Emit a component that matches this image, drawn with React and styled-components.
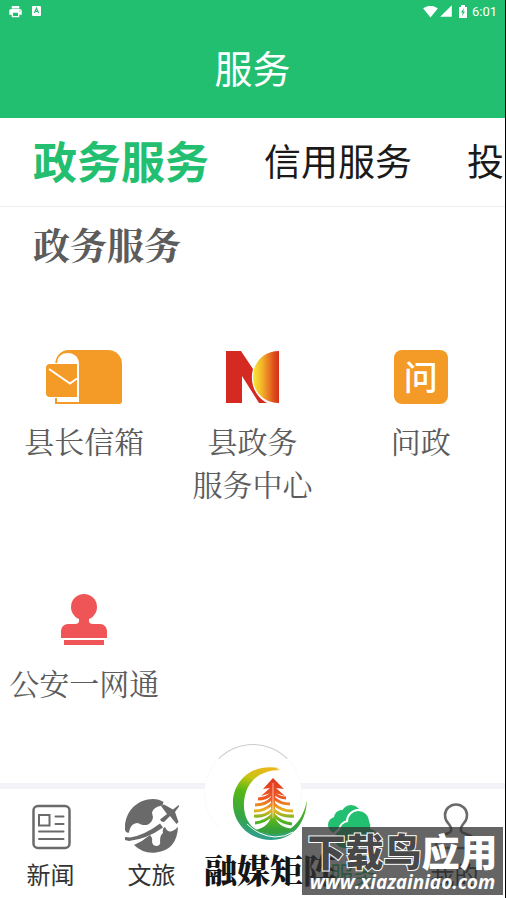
import { useState } from "react"
import styled, { createGlobalStyle } from "styled-components"
import { MdPrint, MdSignalWifi4Bar, MdSignalCellular4Bar } from "react-icons/md"

const tabs = ["政务服务", "信用服务", "投诉建议"]

const App = () => {
    const [tab, setTab] = useState(tabs[0])

    return (
        <>
            <GlobalStyle />
            <Page>
                <Header>
                    <StatusBar>
                        <StatusGroup $gap={9}>
                            <MdPrint size={15} />
                            <KeyboardIcon />
                        </StatusGroup>
                        <StatusGroup $gap={1}>
                            <MdSignalWifi4Bar size={15} />
                            <MdSignalCellular4Bar size={14} />
                            <BatteryIcon />
                            <Clock>6:01</Clock>
                        </StatusGroup>
                    </StatusBar>
                    <Title>服务</Title>
                </Header>

                <Tabs>
                    {tabs.map((name) => (
                        <Tab key={name} $active={name === tab} onClick={() => setTab(name)}>
                            {name}
                        </Tab>
                    ))}
                </Tabs>

                <Main>
                    <SectionHeader>政务服务</SectionHeader>
                    <ServiceGrid>
                        <Service href="#">
                            <MailboxIcon />
                            <span>县长信箱</span>
                        </Service>
                        <Service href="#">
                            <CenterIcon />
                            <span>县政务<br />服务中心</span>
                        </Service>
                        <Service href="#">
                            <AskIcon>问</AskIcon>
                            <span>问政</span>
                        </Service>
                        <Service href="#">
                            <StampIcon />
                            <span>公安一网通</span>
                        </Service>
                    </ServiceGrid>
                </Main>

                <BottomNav>
                    <NavItem href="#">
                        <NewsIcon />
                        新闻
                    </NavItem>
                    <NavItem href="#">
                        <TravelIcon />
                        文旅
                    </NavItem>
                    <NavLogo href="#">
                        <Bubble />
                        <LogoBox>
                            <TreeLogo />
                            <LogoText>融媒矩阵</LogoText>
                        </LogoBox>
                    </NavLogo>
                    <NavItem href="#" $active>
                        <CloudIcon />
                        服务
                    </NavItem>
                    <NavItem href="#">
                        <UserIcon />
                        我的
                    </NavItem>
                </BottomNav>

                <Watermark>
                    <WatermarkName><Outlined>下载鸟</Outlined>应用</WatermarkName>
                    <WatermarkUrl>www.xiazainiao.com</WatermarkUrl>
                </Watermark>
            </Page>
        </>
    )
}

export default App

const KeyboardIcon = () => (
    <svg width="9" height="10" viewBox="0 0 9 10">
        <rect width="9" height="10" rx="1" fill="#fff" />
        <path d="M2.4 7 4.5 2.2 6.6 7M3.2 5.4h2.6" fill="none" stroke="#23bf70" strokeWidth="1.1" />
    </svg>
)

const BatteryIcon = () => (
    <svg width="17" height="13" viewBox="0 0 17 13">
        <path d="M5 2h2V0h4v2h2v11H5z" fill="#fff" />
        <path d="M10 3 7 7.5h1.7L8 11l3-4.5H9.3z" fill="#23bf70" />
    </svg>
)

const MailboxIcon = () => (
    <svg width="76" height="54" viewBox="0 0 76 54">
        <path d="M9 16C9 6 15 0 23 0h39a14 14 0 0 1 14 14v37a3 3 0 0 1-3 3H9z" fill="#f39a27" />
        <path d="M11 52V14C11 7 15 3 22 3s11 5 11 11v38z" fill="#fff" />
        <path d="M4 13h28v35H4a5 5 0 0 1-5-5V18a5 5 0 0 1 5-5z" fill="#fff" />
        <path d="M4 14h27v33H4a4 4 0 0 1-4-4V18a4 4 0 0 1 4-4z" fill="#f39a27" />
        <path d="M3 19 24 33.5 31 28.5" fill="none" stroke="#fff" strokeWidth="2" />
    </svg>
)

const CenterIcon = () => (
    <svg width="53" height="54" viewBox="0 0 53 54">
        <defs>
            <linearGradient id="sun">
                <stop offset="0" stopColor="#f8ea30" />
                <stop offset=".35" stopColor="#f3b32a" />
                <stop offset=".8" stopColor="#de4f1c" />
                <stop offset="1" stopColor="#d63018" />
            </linearGradient>
        </defs>
        <path d="M0 1h15l12 18C23 34 30 47 41 53h-8L16 26v27H0z" fill="#d42a22" />
        <path d="M53 1v52C39 53 27 43 27 27S39 1 53 1z" fill="url(#sun)" />
    </svg>
)

const StampIcon = () => (
    <svg width="46" height="54" viewBox="0 0 46 54" fill="#ef5557">
        <circle cx="23" cy="15" r="13" />
        <path d="M18 25h10v4q0 3 4 3h7a7 7 0 0 1 7 7v7H0v-7a7 7 0 0 1 7-7h7q4 0 4-3z" />
        <path d="M3 48h40v5H3z" />
    </svg>
)

const NewsIcon = () => (
    <svg width="54" height="54" viewBox="0 0 54 54" fill="none" stroke="#6a6a6a" strokeWidth="2.5" strokeLinecap="round">
        <rect x="9.5" y="7" width="36" height="42" rx="4.5" />
        <rect x="15" y="16" width="10.5" height="10.5" strokeWidth="2" />
        <path d="M31.5 17.5h8M31.5 25h8M15 32.5h24.5M15 40h24.5" strokeWidth="2" />
    </svg>
)

const TravelIcon = () => (
    <svg width="54" height="54" viewBox="0 0 54 54" fill="#6a6a6a">
        <path d="M0 31C-1 13 12 0 28 0q6 0 10.5 3l-1 3.5-4.5 1q-5 2-6 6l1 5q-1 5-5 7-3 1-7 0-4-3-8 0-3 2-4 8-3 1-4-2.5z" />
        <path d="M0 38l5 .5q14-2 30-14l3 4Q22 40 4 42l-4-1zM35 20.500l7-5.500-6-8 3-1.5 9 5 5-4q2-1 1 1l-4 5.5 3.500 10-2 2-6.500-8-6 6q-3 0-4-2.500z" />
        <path d="M9 46q9-4 16-10 3 3 2 6 0 5 5 5 4-1 3-5 0-6 3-8-1-5 2-6 3 6 7 4 3-1 6-4Q52 51 31 53.500 18 55 9 46z" />
    </svg>
)

const CloudIcon = () => (
    <svg width="54" height="54" viewBox="0 0 54 54" fill="#23bf70">
        <circle cx="24" cy="16" r="10" />
        <circle cx="15" cy="19" r="8" />
        <circle cx="9" cy="26" r="8" />
        <g stroke="#fff" strokeWidth="4" paintOrder="stroke">
            <path d="M18 49a9.500 9.500 0 0 1-5-18 9 9 0 0 1 8-8 10.500 10.500 0 0 1 21-1 11 11 0 0 1 1 8 10 10 0 0 1 2 19z" />
        </g>
    </svg>
)

const UserIcon = () => (
    <svg width="54" height="54" viewBox="0 0 54 54" fill="none" stroke="#6a6a6a" strokeWidth="2.5">
        <path d="M23 32c1-4-1-5-3-8-2-2-3-5-3-8 0-6 5-10.500 11-10.500S39 10 39 16c0 3-1 6-3 8-2 3-4 4-3 8 1 2 3 2 5 3 7 2 10 5 10 10 0 3-1 4-4 4H12c-3 0-4-1-4-4 0-5 3-8 10-10 2-1 4-1 5-3z" />
    </svg>
)

const TreeLogo = () => (
    <svg width="76" height="76" viewBox="0 0 76 76">
        <defs>
            <linearGradient id="moon" x1=".6" y1="0" x2=".4" y2="1">
                <stop offset="0" stopColor="#f3b31c" />
                <stop offset=".2" stopColor="#c9c514" />
                <stop offset=".4" stopColor="#55b814" />
                <stop offset=".75" stopColor="#35a447" />
                <stop offset="1" stopColor="#2f9f94" />
            </linearGradient>
            <linearGradient id="tree" gradientUnits="userSpaceOnUse" x1="40" y1="12" x2="40" y2="64">
                <stop offset="0" stopColor="#e2361f" />
                <stop offset=".4" stopColor="#ee5a25" />
                <stop offset=".62" stopColor="#e9b322" />
                <stop offset=".82" stopColor="#55b51d" />
                <stop offset="1" stopColor="#35a03c" />
            </linearGradient>
        </defs>
        <path d="M49 4 44 3l3-1C20-3 1 15 1 37c0 21 17 37 38 37 20 0 35-15 36-40-4 22-18 34-34 34C23 68 11 56 12 37 13 17 26 4 49 4z" fill="url(#moon)" />
        <path d="M15 58q12 12 28 13 10 0 18-5" fill="none" stroke="#fff" strokeWidth="1" />
        <path d="M23 64q14-3 16-14h4q2 11 18 13-18 10-38 1z" fill="url(#tree)" />
        <path d="m41 12-10 11 7-1-9 8 10-3v24h4V27l10 3-9-8 8 1z" fill="url(#tree)" />
        <path
            d="M40 27q-5 6-14 6m14-1q-6 7-17 7m17-1q-7 7-18 7m18-1q-7 7-18 6m18-1q-7 7-17 8M42 27q5 5 12 5m-12 0q6 6 16 6m-16 0q7 7 19 7m-19-1q7 7 20 6m-20-1q7 8 18 9"
            fill="none"
            stroke="url(#tree)"
            strokeWidth="3"
        />
        <path d="M41 17v35" stroke="#fff" strokeWidth="1" opacity=".6" />
    </svg>
)

const GlobalStyle = createGlobalStyle`
    * {
        box-sizing: border-box;
    }

    body {
        margin: 0;
        background: #fff;
        font-family: "Noto Sans CJK SC", sans-serif;
    }

    a {
        color: inherit;
        text-decoration: none;
    }

    svg {
        display: block;
        flex: none;
    }
`

const Page = styled.div`
    position: relative;
    display: flex;
    flex-direction: column;
    min-height: 100vh;
    overflow: hidden;
    border-right: 1px solid #000;
`

const Header = styled.header`
    background-color: #23bf70;
    color: #fff;
`

const StatusBar = styled.div`
    display: flex;
    justify-content: space-between;
    height: 22px;
    padding: 0 8px;
`

const StatusGroup = styled.div`
    display: flex;
    align-items: center;
    gap: ${(props) => props.$gap}px;
`

const Clock = styled.span`
    font: 400 13px Roboto, sans-serif;
`

const Title = styled.h1`
    margin: 0;
    height: 96px;
    font-size: 38px;
    font-weight: 400;
    line-height: 90px;
    text-align: center;
`

const Tabs = styled.nav`
    display: flex;
    align-items: flex-start;
    gap: 55px;
    height: 89px;
    padding-left: 33px;
    overflow: hidden;
    border-bottom: 1px solid #eee;
`

const Tab = styled.button`
    flex: none;
    padding: 0;
    border: 0;
    background: none;
    font-family: inherit;
    font-size: ${(props) => (props.$active ? "44px" : "37px")};
    font-weight: ${(props) => (props.$active ? 700 : 400)};
    line-height: 84px;
    color: ${(props) => (props.$active ? "#23bf70" : "#1a1a1a")};
    cursor: pointer;
`

const Main = styled.main`
    flex: 1;
    color: #5c5c5c;
    font-family: "Noto Serif CJK SC", "Source Han Serif SC", "Noto Sans CJK SC", serif;
`

const SectionHeader = styled.h2`
    margin: 0;
    padding-left: 33px;
    font-size: 37px;
    font-weight: 700;
    line-height: 74px;
`

const ServiceGrid = styled.section`
    display: grid;
    grid-template-columns: repeat(3, 1fr);
    row-gap: 87px;
    padding-top: 69px;
`

const Service = styled.a`
    display: flex;
    flex-direction: column;
    align-items: center;
    gap: 15px;
    font-size: 30px;
    line-height: 43px;
    text-align: center;
    white-space: nowrap;
`

const AskIcon = styled.span`
    width: 54px;
    height: 54px;
    border-radius: 8px;
    background-color: #f39a27;
    color: #fff;
    font-family: "Noto Sans CJK SC", sans-serif;
    font-size: 34px;
    font-weight: 500;
    line-height: 52px;
`

const BottomNav = styled.nav`
    position: sticky;
    bottom: 0;
    display: grid;
    grid-template-columns: repeat(5, 1fr);
    height: 115px;
    border-top: 6px solid #f2f2f8;
    background-color: #fff;
`

const NavItem = styled.a`
    display: flex;
    flex-direction: column;
    align-items: center;
    gap: 3px;
    padding-top: 10px;
    font-size: 24px;
    line-height: 36px;
    color: ${(props) => (props.$active ? "#23bf70" : "#333")};
`

const NavLogo = styled.a`
    position: relative;
    min-width: 0;
`

const Bubble = styled.span`
    position: absolute;
    top: -45px;
    left: 50%;
    width: 98px;
    height: 98px;
    margin-left: -49px;
    border: 1px solid #fafafa;
    border-top-color: #ccc;
    border-bottom-color: #fff;
    border-radius: 50%;
    background-color: #fff;
`

/* the logo is wider than its column and hangs over the bar */
const LogoBox = styled.span`
    position: relative;
    display: flex;
    flex-direction: column;
    align-items: center;
    width: 136px;
    margin-top: -23px;
`

const LogoText = styled.span`
    color: #151515;
    font-family: "Noto Serif CJK SC", "Noto Sans CJK SC", serif;
    font-size: 33px;
    font-weight: 900;
    line-height: 54px;
    white-space: nowrap;
`

const Watermark = styled.aside`
    position: absolute;
    right: 2px;
    bottom: 3px;
    width: 201px;
    height: 68px;
    background-color: rgba(50, 50, 50, 0.75);
    color: #fff;
    text-align: center;
    white-space: nowrap;
`

const WatermarkName = styled.div`
    font-size: 38px;
    font-weight: 900;
    line-height: 46px;
`

const Outlined = styled.span`
    color: #484848;
    paint-order: stroke fill;
    -webkit-text-stroke: 2px #fff;
`

const WatermarkUrl = styled.div`
    font-family: "Open Sans", "Noto Sans", sans-serif;
    font-size: 19px;
    font-style: italic;
    font-weight: 700;
    line-height: 18px;
`
